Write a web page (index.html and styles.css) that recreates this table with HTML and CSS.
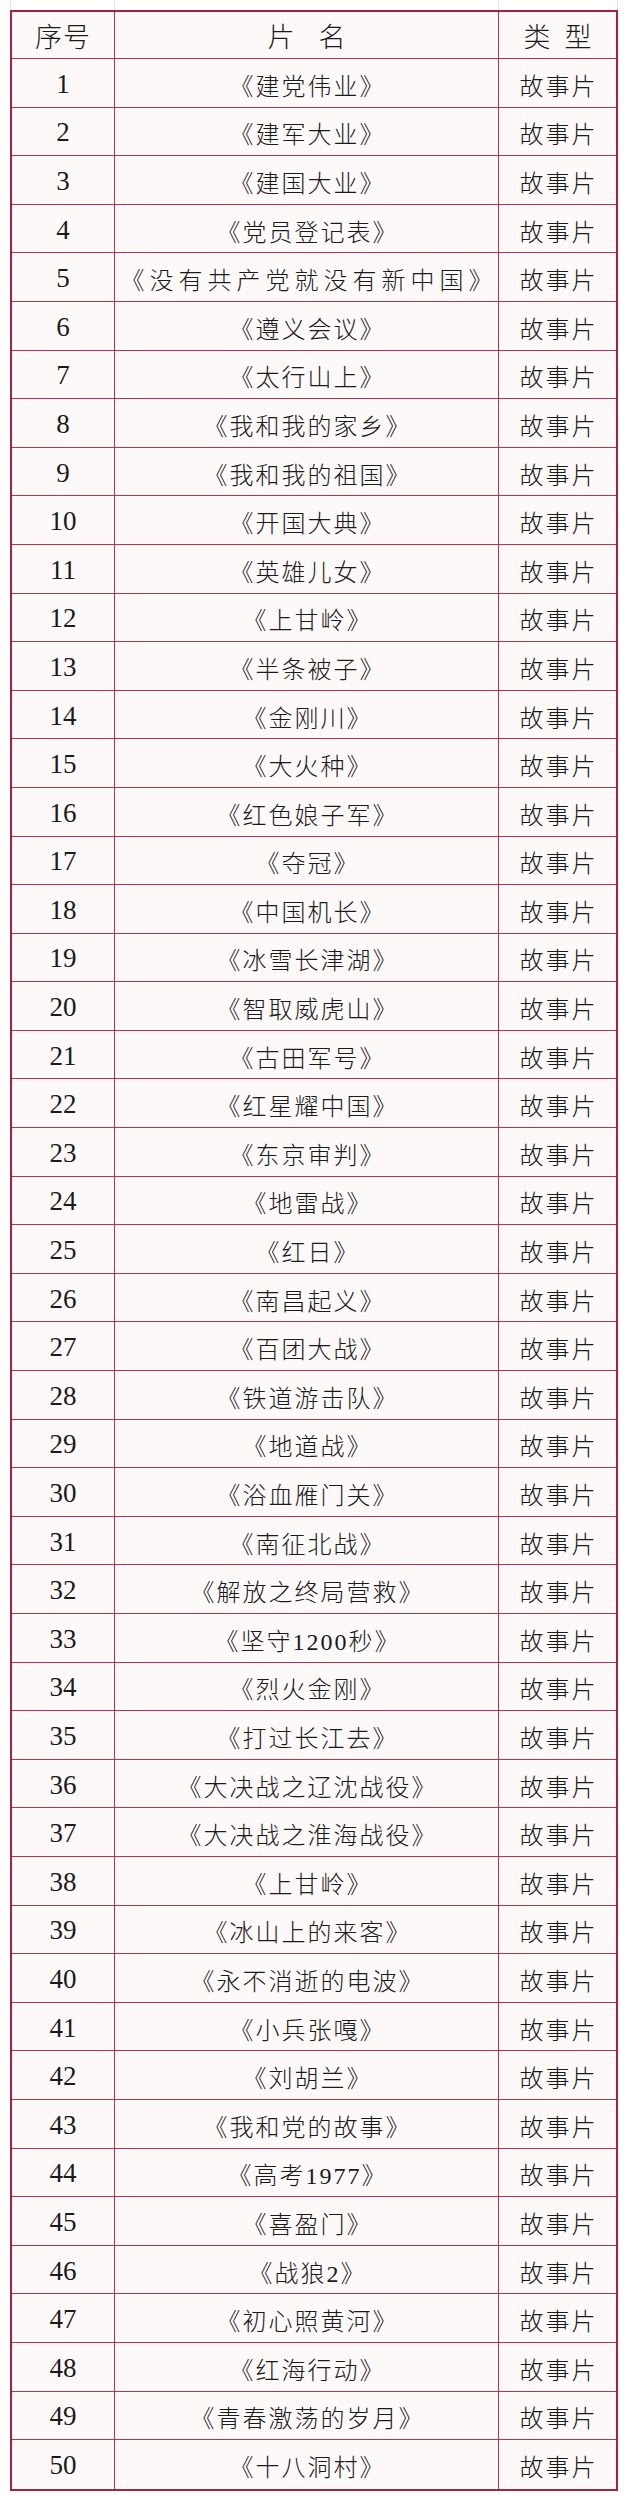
FILE: index.html
```html
<!DOCTYPE html>
<html lang="zh-CN">
<head>
<meta charset="utf-8">
<title>片单</title>
<link rel="stylesheet" href="styles.css">
</head>
<body>
<div class="page">
  <div class="ghost"><span></span><span></span><span></span></div>
  <div class="sheet">
    <div class="row head"><div class="cell">序号</div><div class="cell wide">片 名</div><div class="cell wide2">类 型</div></div>
    <div class="row"><div class="cell num">1</div><div class="cell title">《建党伟业》</div><div class="cell kind">故事片</div></div>
    <div class="row"><div class="cell num">2</div><div class="cell title">《建军大业》</div><div class="cell kind">故事片</div></div>
    <div class="row"><div class="cell num">3</div><div class="cell title">《建国大业》</div><div class="cell kind">故事片</div></div>
    <div class="row"><div class="cell num">4</div><div class="cell title">《党员登记表》</div><div class="cell kind">故事片</div></div>
    <div class="row"><div class="cell num">5</div><div class="cell title spread">《没有共产党就没有新中国》</div><div class="cell kind">故事片</div></div>
    <div class="row"><div class="cell num">6</div><div class="cell title">《遵义会议》</div><div class="cell kind">故事片</div></div>
    <div class="row"><div class="cell num">7</div><div class="cell title">《太行山上》</div><div class="cell kind">故事片</div></div>
    <div class="row"><div class="cell num">8</div><div class="cell title">《我和我的家乡》</div><div class="cell kind">故事片</div></div>
    <div class="row"><div class="cell num">9</div><div class="cell title">《我和我的祖国》</div><div class="cell kind">故事片</div></div>
    <div class="row"><div class="cell num">10</div><div class="cell title">《开国大典》</div><div class="cell kind">故事片</div></div>
    <div class="row"><div class="cell num">11</div><div class="cell title">《英雄儿女》</div><div class="cell kind">故事片</div></div>
    <div class="row"><div class="cell num">12</div><div class="cell title">《上甘岭》</div><div class="cell kind">故事片</div></div>
    <div class="row"><div class="cell num">13</div><div class="cell title">《半条被子》</div><div class="cell kind">故事片</div></div>
    <div class="row"><div class="cell num">14</div><div class="cell title">《金刚川》</div><div class="cell kind">故事片</div></div>
    <div class="row"><div class="cell num">15</div><div class="cell title">《大火种》</div><div class="cell kind">故事片</div></div>
    <div class="row"><div class="cell num">16</div><div class="cell title">《红色娘子军》</div><div class="cell kind">故事片</div></div>
    <div class="row"><div class="cell num">17</div><div class="cell title">《夺冠》</div><div class="cell kind">故事片</div></div>
    <div class="row"><div class="cell num">18</div><div class="cell title">《中国机长》</div><div class="cell kind">故事片</div></div>
    <div class="row"><div class="cell num">19</div><div class="cell title">《冰雪长津湖》</div><div class="cell kind">故事片</div></div>
    <div class="row"><div class="cell num">20</div><div class="cell title">《智取威虎山》</div><div class="cell kind">故事片</div></div>
    <div class="row"><div class="cell num">21</div><div class="cell title">《古田军号》</div><div class="cell kind">故事片</div></div>
    <div class="row"><div class="cell num">22</div><div class="cell title">《红星耀中国》</div><div class="cell kind">故事片</div></div>
    <div class="row"><div class="cell num">23</div><div class="cell title">《东京审判》</div><div class="cell kind">故事片</div></div>
    <div class="row"><div class="cell num">24</div><div class="cell title">《地雷战》</div><div class="cell kind">故事片</div></div>
    <div class="row"><div class="cell num">25</div><div class="cell title">《红日》</div><div class="cell kind">故事片</div></div>
    <div class="row"><div class="cell num">26</div><div class="cell title">《南昌起义》</div><div class="cell kind">故事片</div></div>
    <div class="row"><div class="cell num">27</div><div class="cell title">《百团大战》</div><div class="cell kind">故事片</div></div>
    <div class="row"><div class="cell num">28</div><div class="cell title">《铁道游击队》</div><div class="cell kind">故事片</div></div>
    <div class="row"><div class="cell num">29</div><div class="cell title">《地道战》</div><div class="cell kind">故事片</div></div>
    <div class="row"><div class="cell num">30</div><div class="cell title">《浴血雁门关》</div><div class="cell kind">故事片</div></div>
    <div class="row"><div class="cell num">31</div><div class="cell title">《南征北战》</div><div class="cell kind">故事片</div></div>
    <div class="row"><div class="cell num">32</div><div class="cell title">《解放之终局营救》</div><div class="cell kind">故事片</div></div>
    <div class="row"><div class="cell num">33</div><div class="cell title">《坚守1200秒》</div><div class="cell kind">故事片</div></div>
    <div class="row"><div class="cell num">34</div><div class="cell title">《烈火金刚》</div><div class="cell kind">故事片</div></div>
    <div class="row"><div class="cell num">35</div><div class="cell title">《打过长江去》</div><div class="cell kind">故事片</div></div>
    <div class="row"><div class="cell num">36</div><div class="cell title">《大决战之辽沈战役》</div><div class="cell kind">故事片</div></div>
    <div class="row"><div class="cell num">37</div><div class="cell title">《大决战之淮海战役》</div><div class="cell kind">故事片</div></div>
    <div class="row"><div class="cell num">38</div><div class="cell title">《上甘岭》</div><div class="cell kind">故事片</div></div>
    <div class="row"><div class="cell num">39</div><div class="cell title">《冰山上的来客》</div><div class="cell kind">故事片</div></div>
    <div class="row"><div class="cell num">40</div><div class="cell title">《永不消逝的电波》</div><div class="cell kind">故事片</div></div>
    <div class="row"><div class="cell num">41</div><div class="cell title">《小兵张嘎》</div><div class="cell kind">故事片</div></div>
    <div class="row"><div class="cell num">42</div><div class="cell title">《刘胡兰》</div><div class="cell kind">故事片</div></div>
    <div class="row"><div class="cell num">43</div><div class="cell title">《我和党的故事》</div><div class="cell kind">故事片</div></div>
    <div class="row"><div class="cell num">44</div><div class="cell title">《高考1977》</div><div class="cell kind">故事片</div></div>
    <div class="row"><div class="cell num">45</div><div class="cell title">《喜盈门》</div><div class="cell kind">故事片</div></div>
    <div class="row"><div class="cell num">46</div><div class="cell title">《战狼2》</div><div class="cell kind">故事片</div></div>
    <div class="row"><div class="cell num">47</div><div class="cell title">《初心照黄河》</div><div class="cell kind">故事片</div></div>
    <div class="row"><div class="cell num">48</div><div class="cell title">《红海行动》</div><div class="cell kind">故事片</div></div>
    <div class="row"><div class="cell num">49</div><div class="cell title">《青春激荡的岁月》</div><div class="cell kind">故事片</div></div>
    <div class="row"><div class="cell num">50</div><div class="cell title">《十八洞村》</div><div class="cell kind">故事片</div></div>
  </div>
</div>
</body>
</html>
```

FILE: styles.css
```css
html, body {
  margin: 0;
  padding: 0;
  background: #ffffff;
}

body {
  font-family: "Noto Sans CJK SC", sans-serif;
  color: #1a1a1a;
}

.page {
  margin-left: 10px;
  width: 608px;
}

.ghost {
  height: 10px;
  display: grid;
  grid-template-columns: 104px 384px 1fr;
  border-left: 1px solid #e4e4e4;
  border-right: 1px solid #e4e4e4;
  box-sizing: border-box;
}

.ghost span {
  border-right: 1px solid #e4e4e4;
}

.ghost span:last-child {
  border-right: 0;
}

.sheet {
  border: 2.5px solid #a8213f;
  background: #fdf9f9;
}

.row {
  display: grid;
  grid-template-columns: 103px 384px 1fr;
  height: 48.6px;
  box-sizing: border-box;
  border-bottom: 1.5px solid #b53451;
}

.row:last-child {
  border-bottom: 0;
}

.row.head {
  height: 47px;
}

.cell {
  display: flex;
  align-items: center;
  justify-content: center;
  border-right: 1.5px solid #b53451;
  padding-top: 3px;
  box-sizing: border-box;
  font-weight: 300;
  white-space: pre;
}

.cell:last-child {
  border-right: 0;
}

.head .cell {
  font-size: 27px;
  letter-spacing: 1px;
  padding-top: 1px;
}

.head .wide {
  letter-spacing: 9px;
  padding-left: 9px;
}

.head .wide2 {
  letter-spacing: 4px;
  padding-left: 4px;
}

.num {
  font-family: "Liberation Serif", serif;
  font-size: 27px;
  font-weight: 400;
}

.title {
  font-family: "Liberation Serif", "Noto Sans CJK SC", serif;
  font-size: 24px;
  letter-spacing: 2px;
  padding-left: 2px;
}

.title.spread {
  letter-spacing: 5px;
  padding-left: 5px;
}

.kind {
  font-size: 24px;
  letter-spacing: 2px;
  padding-left: 2px;
}
```
